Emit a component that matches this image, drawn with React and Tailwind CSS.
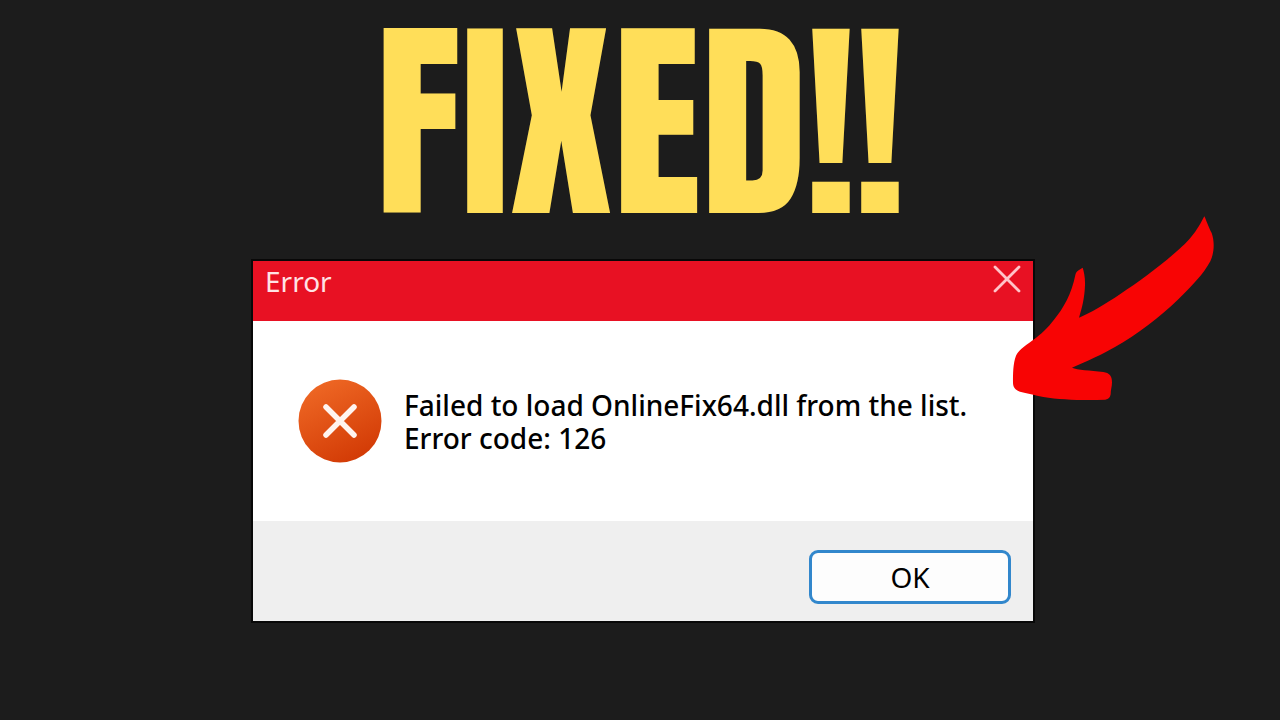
import React, { useState } from 'react';

const uiFont = "font-['Segoe_UI','Noto_Sans','Open_Sans',sans-serif]";

function CloseIcon() {
  return (
    <svg className="w-7 h-7" viewBox="0 0 28 28" fill="none" stroke="#ffc4c9" strokeWidth="2.8" strokeLinecap="round">
      <path d="M2 2l24 24M26 2L2 26" />
    </svg>
  );
}

function ErrorIcon() {
  return (
    <svg className="w-[84px] h-[84px] shrink-0" viewBox="0 0 84 84" fill="none">
      <defs>
        <linearGradient id="errorFill" x1="20" y1="4" x2="60" y2="82" gradientUnits="userSpaceOnUse">
          <stop offset="0" stopColor="#ee6724" />
          <stop offset="1" stopColor="#d23a05" />
        </linearGradient>
      </defs>
      <circle cx="42" cy="42" r="41.5" fill="url(#errorFill)" />
      <path d="M28 28l28 28M56 28L28 56" stroke="#fff4ef" strokeWidth="5.5" strokeLinecap="round" />
    </svg>
  );
}

function Arrow() {
  return (
    <svg
      className="absolute -top-12 -right-[185px] w-[208px] h-48 pointer-events-none"
      viewBox="60 38 624 576"
      fill="#f80404"
    >
      <path d="M643 48C649 60 655 80 665 98C675 126 672 160 661 183C640 222 604 259 565 297C510 350 440 405 375 440C340 460 290 484 246 502C262 509 300 510 340 515C358 518 366 526 366 546C366 560 362 568 362 582C360 592 356 597 346 598C290 601 215 599 160 590C135 584 110 579 90 574C74 568 69 560 69 546C69 520 69 490 78 466C86 450 100 441 128 420C155 400 172 384 192 358C220 325 245 280 256 224C258 212 268 208 278 202C282 215 286 232 285 255C284 290 276 325 267 352C300 338 345 312 392 280C440 250 500 205 550 162C590 128 612 108 643 48Z" />
    </svg>
  );
}

export default function App() {
  const [open, setOpen] = useState(true);

  return (
    <div className="min-h-screen bg-[#1c1c1c] flex flex-col items-center pl-1.5">
      <h1 className="h-[259px] pb-4 pr-1.5 flex items-center leading-none whitespace-nowrap text-[214px] font-normal text-[#ffde59] font-['Anton','Impact',sans-serif]">
        FIXED!!
      </h1>

      {open && (
        <div
          role="alertdialog"
          aria-labelledby="dialog-title"
          aria-describedby="dialog-message"
          className={`relative w-full max-w-[784px] border-2 border-[#080808] bg-white text-black ${uiFont}`}
        >
          <div className="flex items-start justify-between h-[60px] pl-3 pr-3 bg-[#e81123]">
            <h2 id="dialog-title" className="pt-1 text-[28px] leading-8 text-[#ffe3e5]">Error</h2>
            <button type="button" aria-label="Close" className="pt-1" onClick={() => setOpen(false)}>
              <CloseIcon />
            </button>
          </div>

          <div className="flex items-center gap-[22px] h-[200px] pl-[45px]">
            <ErrorIcon />
            <p id="dialog-message" className="pt-0.5 text-[28px] leading-[33px] font-medium whitespace-nowrap">
              Failed to load OnlineFix64.dll from the list.
              <br />
              Error code: 126
            </p>
          </div>

          <div className="flex items-center justify-end h-[100px] pt-3 pr-[22px] bg-[#efefef]">
            <button
              type="button"
              className="w-[202px] h-[54px] rounded-[9px] border-3 border-[#3287cc] bg-[#fdfdfd] text-[28px] leading-8"
              onClick={() => setOpen(false)}
            >
              OK
            </button>
          </div>

          <Arrow />
        </div>
      )}
    </div>
  );
}
